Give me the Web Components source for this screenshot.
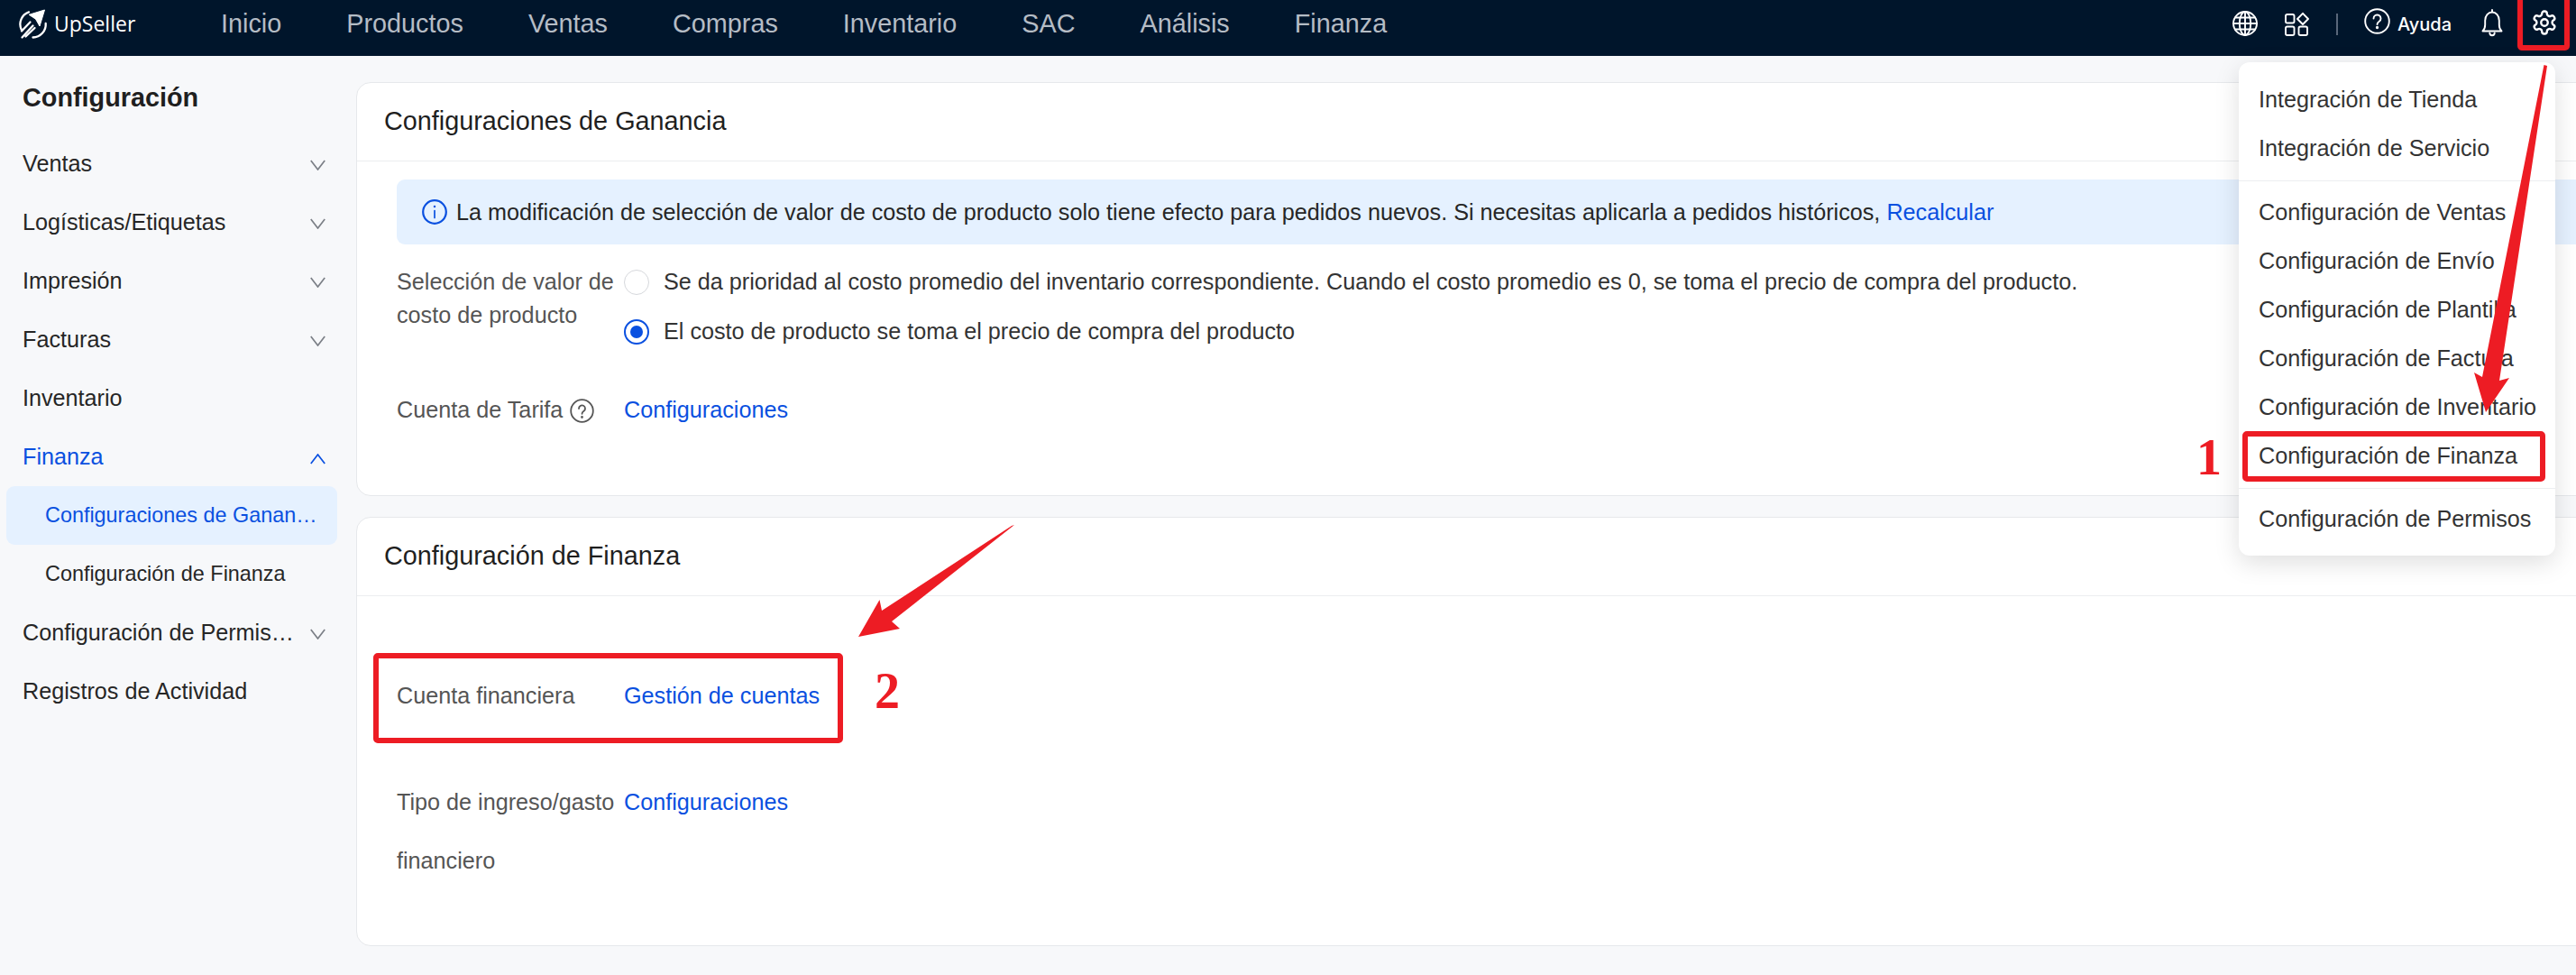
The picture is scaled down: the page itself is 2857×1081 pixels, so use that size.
<!DOCTYPE html>
<html lang="es"><head><meta charset="utf-8"><title>UpSeller</title>
<style>
html,body{margin:0;height:1081px;overflow:hidden;background:#f7f8fa;font-family:"Liberation Sans",Arial,sans-serif;color:#333}
a{color:#0a50e0;text-decoration:none}
</style></head><body>
<x-app>
  <x-topbar slot="top">
    <x-nav-link>Inicio</x-nav-link><x-nav-link>Productos</x-nav-link><x-nav-link>Ventas</x-nav-link><x-nav-link>Compras</x-nav-link><x-nav-link>Inventario</x-nav-link><x-nav-link>SAC</x-nav-link><x-nav-link>Análisis</x-nav-link><x-nav-link>Finanza</x-nav-link>
  </x-topbar>
  <x-sidebar slot="side" heading="Configuración">
    <x-side-item chevron="down">Ventas</x-side-item>
    <x-side-item chevron="down">Logísticas/Etiquetas</x-side-item>
    <x-side-item chevron="down">Impresión</x-side-item>
    <x-side-item chevron="down">Facturas</x-side-item>
    <x-side-item>Inventario</x-side-item>
    <x-side-item chevron="up" open>Finanza</x-side-item>
    <x-side-item sub active>Configuraciones de Ganancia</x-side-item>
    <x-side-item sub>Configuración de Finanza</x-side-item>
    <x-side-item chevron="down">Configuración de Permisos</x-side-item>
    <x-side-item>Registros de Actividad</x-side-item>
  </x-sidebar>
  <x-card heading="Configuraciones de Ganancia" style="--pb:76px">
    <x-alert>La modificación de selección de valor de costo de producto solo tiene efecto para pedidos nuevos. Si necesitas aplicarla a pedidos históricos, <a href="#">Recalcular</a></x-alert>
    <x-form-row variant="radios">
      <span slot="label">Selección de valor de costo de producto</span>
      <x-radio>Se da prioridad al costo promedio del inventario correspondiente. Cuando el costo promedio es 0, se toma el precio de compra del producto.</x-radio>
      <x-radio checked>El costo de producto se toma el precio de compra del producto</x-radio>
    </x-form-row>
    <x-form-row style="--mt:41px">
      <span slot="label">Cuenta de Tarifa <x-help></x-help></span>
      <a href="#">Configuraciones</a>
    </x-form-row>
  </x-card>
  <x-card heading="Configuración de Finanza" style="--pb:61px;--pt:92px">
    <x-form-row>
      <span slot="label">Cuenta financiera</span>
      <a href="#">Gestión de cuentas</a>
    </x-form-row>
    <x-form-row variant="tall" style="--mt:67px">
      <span slot="label">Tipo de ingreso/gasto financiero</span>
      <a href="#">Configuraciones</a>
    </x-form-row>
  </x-card>
  <x-dropdown slot="over">
    <x-menu-item>Integración de Tienda</x-menu-item>
    <x-menu-item>Integración de Servicio</x-menu-item>
    <x-menu-sep></x-menu-sep>
    <x-menu-item>Configuración de Ventas</x-menu-item>
    <x-menu-item>Configuración de Envío</x-menu-item>
    <x-menu-item>Configuración de Plantilla</x-menu-item>
    <x-menu-item>Configuración de Factura</x-menu-item>
    <x-menu-item>Configuración de Inventario</x-menu-item>
    <x-menu-item>Configuración de Finanza</x-menu-item>
    <x-menu-sep style="margin-bottom:6px"></x-menu-sep>
    <x-menu-item>Configuración de Permisos</x-menu-item>
  </x-dropdown>
  <x-annotations slot="over"></x-annotations>
</x-app>
<script>
function def(name,html){customElements.define(name,class extends HTMLElement{constructor(){super();this.attachShadow({mode:'open'}).innerHTML=html;
  const h=this.getAttribute('heading');const t=this.shadowRoot.querySelector('.heading');if(t&&h)t.textContent=h;}});}
def('x-app',`<style>:host{display:block;position:relative;width:2857px;height:1081px;overflow:hidden}
.body{display:flex;align-items:flex-start}
main{flex:1;min-width:0;margin-right:-30px;padding-top:29px;display:flex;flex-direction:column;gap:23px}
</style><slot name="top"></slot><div class="body"><slot name="side"></slot><main><slot></slot></main></div><slot name="over"></slot>`);
def('x-topbar',`<style>:host{display:flex;align-items:center;box-sizing:border-box;height:62px;padding:0 20px 9px 20px;background:#00152b;color:#fff}
.logo{display:flex;align-items:center;gap:4px;width:130px;margin-right:95px}
.logo svg{flex:none;width:36px;height:36px;display:block}
.word{font:500 23px/1 "Open Sans",sans-serif;color:#fff}
nav{display:flex;gap:72px}
.tools{margin-left:auto;display:flex;align-items:center;color:#fff}
.tools svg{display:block;fill:none;stroke:currentColor;stroke-width:1.9;stroke-linecap:round;stroke-linejoin:round}
.sep{width:2px;height:24px;background:#59677a}
.ayuda{font:500 20px/1 Inter,sans-serif;margin-left:8px}
</style>
<div class="logo"><svg viewBox="20 8 36 36" fill="none" stroke="#fff" stroke-width="2.3" stroke-linecap="round">
<path d="M32 12.4A14.2 14.2 0 0 0 23.8 32"/><path d="M36.5 40.5A14.4 14.4 0 0 0 50.7 25"/>
<path d="M32.5 15.2 49.5 10 44 28 39.7 20.4Z" fill="#fff" stroke="#fff" stroke-width="1" stroke-linejoin="round"/>
<path d="M24.5 40.5 36.5 27.5M28.5 39.500 38.5 30M24 33.500 33.500 23.500"/></svg><span class="word">UpSeller</span></div>
<nav><slot></slot></nav>
<div class="tools">
<svg style="margin-top:-1px" width="30" height="30" viewBox="0 0 30 30"><circle cx="15" cy="15" r="13"/><ellipse cx="15" cy="15" rx="6.200" ry="13"/><path d="M15 2v26M2 15h26M4 8.500h22M4 21.500h22"/></svg>
<svg style="margin-left:28px;margin-top:1px" width="28" height="28" viewBox="0 0 28 28"><rect x="2" y="3" width="9.500" height="9.500" rx="1.800"/><rect x="2" y="16.500" width="9.500" height="9.500" rx="1.800"/><rect x="16.500" y="16.500" width="9.500" height="9.500" rx="1.800"/><path d="M21 1.800 27 8 21 14 15 8Z"/></svg>
<span class="sep" style="margin-left:30px"></span>
<svg style="margin-left:29px;margin-top:-6px" width="29" height="29" viewBox="0 0 29 29"><circle cx="14.500" cy="14.500" r="13.300"/><path d="M10.500 11.500a4 4 0 1 1 6.200 3.300c-1.500 1-2.200 1.700-2.200 3.200"/><circle cx="14.500" cy="21.500" r=".7" fill="currentColor"/></svg>
<span class="ayuda">Ayuda</span>
<svg style="margin-left:31px;margin-top:-3px" width="28" height="32" viewBox="0 0 28 32" stroke-width="2.100"><path d="M14 2v2.500M3.500 25.500c2-2 2.700-4 2.700-7v-4.800a7.800 9.200 0 0 1 15.600 0v4.800c0 3 .7 5 2.700 7Z"/><path d="M11.300 27.500a2.700 2.700 0 0 0 5.400 0"/></svg>
<svg style="margin-left:29px;margin-top:-3px" width="30" height="30" viewBox="0 0 24 24" stroke-width="1.600"><path d="M12.220 2h-.44a2 2 0 0 0-2 2v.18a2 2 0 0 1-1 1.730l-.43.25a2 2 0 0 1-2 0l-.15-.08a2 2 0 0 0-2.730.73l-.22.38a2 2 0 0 0 .73 2.730l.15.1a2 2 0 0 1 1 1.720v.51a2 2 0 0 1-1 1.740l-.15.09a2 2 0 0 0-.73 2.730l.22.38a2 2 0 0 0 2.730.73l.15-.08a2 2 0 0 1 2 0l.43.25a2 2 0 0 1 1 1.730V20a2 2 0 0 0 2 2h.44a2 2 0 0 0 2-2v-.18a2 2 0 0 1 1-1.730l.43-.25a2 2 0 0 1 2 0l.15.08a2 2 0 0 0 2.730-.73l.22-.39a2 2 0 0 0-.73-2.730l-.15-.08a2 2 0 0 1-1-1.740v-.5a2 2 0 0 1 1-1.740l.15-.09a2 2 0 0 0 .73-2.730l-.22-.38a2 2 0 0 0-2.730-.73l-.15.08a2 2 0 0 1-2 0l-.43-.25a2 2 0 0 1-1-1.730V4a2 2 0 0 0-2-2z"/><circle cx="12" cy="12" r="3"/></svg>
</div>`);
def('x-nav-link',`<style>:host{display:block;font-size:28.800px;line-height:53px;color:#b5bcc5;white-space:nowrap}</style><slot></slot>`);
def('x-sidebar',`<style>:host{display:block;flex:none;width:395px;box-sizing:border-box;padding-top:20px}
.heading{font-size:28.800px;font-weight:700;line-height:52px;color:#1f1f1f;margin:0 0 15px 25px}
</style><div class="heading"></div><slot></slot>`);
def('x-side-item',`<style>:host{display:flex;align-items:center;gap:17.500px;height:65px;box-sizing:border-box;padding:0 34px 1px 25px;font-size:25.200px;color:#262626}
:host([sub]){font-size:23.400px;margin-left:7px;width:367px;padding:0 16px 0 43px;border-radius:9px}
:host([active]){background:#e5f1ff;color:#0a50e0}
:host([open]){color:#0a50e0}
.t{flex:1;min-width:0;white-space:nowrap;overflow:hidden;text-overflow:ellipsis}
svg{flex:none;width:17px;height:12px;margin-top:3px;fill:none;stroke:#7b7f86;stroke-width:1.700}
:host(:not([chevron])) svg{display:none}
:host([chevron=up]) svg{transform:rotate(180deg);margin-top:5px;stroke:#0a50e0}
</style><span class="t"><slot></slot></span><svg viewBox="0 0 17 12"><path d="M.8 1 8.500 11 16.200 1"/></svg>`);
def('x-card',`<style>:host{display:block;box-sizing:border-box;background:#fff;border:1px solid #e6e8eb;border-radius:16px}
.head{box-sizing:border-box;height:87px;padding:0 30px 2px;display:flex;align-items:center;border-bottom:1px solid #eceef0;font-size:28.800px;color:#1f1f1f}
.content{padding:var(--pt,20px) 0 var(--pb,0) 44px}
</style><div class="head heading"></div><div class="content"><slot></slot></div>`);
def('x-alert',`<style>:host{display:flex;align-items:center;gap:10px;height:72px;box-sizing:border-box;padding-left:28px;background:#e5f1ff;border-radius:9px;font-size:25.200px;color:#262626;margin-bottom:14px;white-space:nowrap}
svg{flex:none;width:28px;height:28px;fill:none;stroke:#0a50e0;stroke-width:2.200;stroke-linecap:round}
</style><svg viewBox="0 0 28 28"><circle cx="14" cy="14" r="12.800"/><path d="M14 12.500v8" stroke-width="1.700"/><circle cx="14" cy="8" r=".5" fill="#0a50e0" stroke-width="1.500"/></svg><span><slot></slot></span>`);
def('x-form-row',`<style>:host{display:grid;grid-template-columns:252px 1fr;margin-top:var(--mt,0);font-size:25.200px;line-height:37px}
.l{color:#555;padding-right:8px}
:host([variant=radios]) .l{padding-top:9px}
:host([variant=tall]) .l{line-height:65px}
:host([variant=tall]) .c{line-height:65px}
.c{min-width:0}
</style><div class="l"><slot name="label"></slot></div><div class="c"><slot></slot></div>`);
def('x-help',`<style>:host{display:inline-block;vertical-align:-6px;margin-left:1px;width:27px;height:27px}
svg{display:block;fill:none;stroke:#555;stroke-width:1.800;stroke-linecap:round}
</style><svg viewBox="0 0 27 27"><circle cx="13.500" cy="13.500" r="12.300"/><path d="M10 11a3.500 3.500 0 1 1 5.500 2.800c-1.300.9-2 1.500-2 3"/><circle cx="13.500" cy="20.500" r=".5" fill="#555"/></svg>`);
def('x-radio',`<style>:host{display:flex;align-items:center;gap:16px;height:55px;font-size:25.200px;color:#333;white-space:nowrap}
i{flex:none;box-sizing:border-box;width:28px;height:28px;border-radius:50%;border:1.500px solid #d6d8dc;background:#fff;display:flex;align-items:center;justify-content:center}
:host([checked]) i{border:2px solid #0a50e0}
:host([checked]) i::after{content:"";width:14px;height:14px;border-radius:50%;background:#0a50e0}
</style><i></i><span><slot></slot></span>`);
def('x-dropdown',`<style>:host{position:absolute;left:2483px;top:69px;width:351px;box-sizing:border-box;padding:14px 0;background:#fff;border-radius:12px;box-shadow:0 8px 28px rgba(0,0,0,.13)}</style><slot></slot>`);
def('x-menu-item',`<style>:host{display:block;height:54px;line-height:54px;padding-left:22px;font-size:25.200px;color:#333;white-space:nowrap}</style><slot></slot>`);
def('x-menu-sep',`<style>:host{display:block;height:1px;margin:9px 0 7px;background:#eceef0}</style>`);
def('x-annotations',`<style>:host{position:absolute;left:0;top:0;width:2857px;height:1081px;pointer-events:none}
svg{display:block}
text{font:700 56px "Liberation Serif",serif;fill:#ed1c24;text-anchor:middle}
rect{fill:none;stroke:#ed1c24;stroke-width:6}
polygon{fill:#ed1c24}
</style><svg width="2857" height="1081" viewBox="0 0 2857 1081">
<rect x="2795" y="-3" width="52" height="56" rx="2"/>
<rect x="2490" y="481" width="330" height="50" rx="2"/>
<rect x="417" y="727" width="515" height="94" rx="2"/>
<polygon points="2821.500,72 2825,73 2772,422 2783,419 2757,457 2744,413 2753,418"/>
<polygon points="1122,583 1125,582 989,689 998,697 952,706 975.500,665 978,677"/>
<text x="2450" y="526">1</text><text x="984" y="785">2</text>
</svg>`);
</script>
</body></html>
